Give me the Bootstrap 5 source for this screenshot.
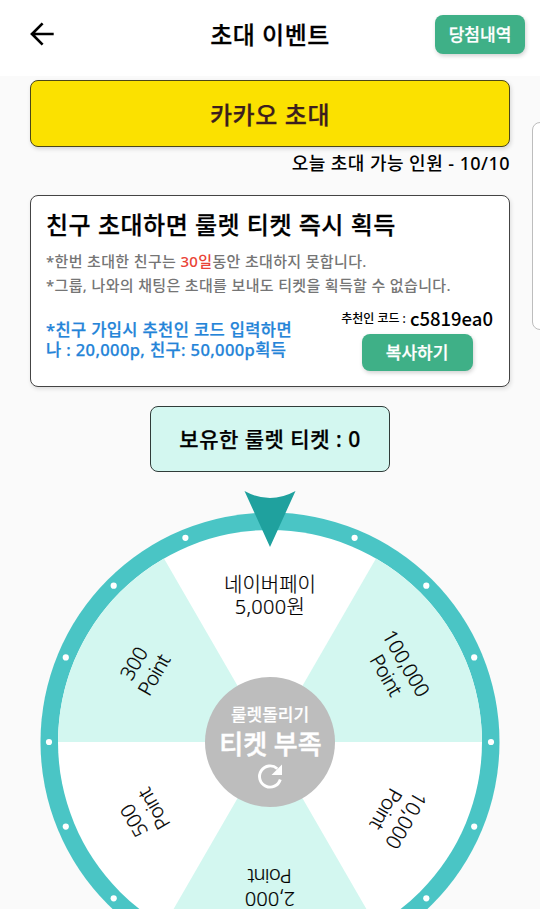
<!DOCTYPE html>
<html lang="ko">
<head>
<meta charset="utf-8">
<meta name="viewport" content="width=device-width, initial-scale=1">
<title>초대 이벤트</title>
<link href="https://cdn.jsdelivr.net/npm/bootstrap@5.3.0/dist/css/bootstrap.min.css" rel="stylesheet">
<style>
body{background:#fafafa;color:#000;height:909px;font-family:"Noto Sans","Noto Sans CJK KR",sans-serif;font-weight:500;line-height:1}
.topbar{height:76px;padding:0 15px 8px}
.topbar>*{flex:1 1 0}
.back svg{margin-left:12px}
.title{font-size:24px;letter-spacing:.5px;padding-top:2px}
.title,.btn,.invite h1,.bonus,.tickets{-webkit-text-stroke:.25px currentColor}
.btn-mint{--bs-btn-bg:#3fb087;--bs-btn-color:#fff;--bs-btn-border-color:#3fb087;--bs-btn-hover-bg:#369a76;--bs-btn-hover-color:#fff;border:0;border-radius:8px;box-shadow:1px 2px 4px rgba(0,0,0,.18);font-weight:500;line-height:1;padding:0}
.btn-history{width:90px;height:39px;font-size:17px}
.btn-copy{width:111px;height:37px;font-size:17px}
.page{padding:4px 30px 0}
.btn-kakao,.btn-kakao:hover{height:67px;background:#fbe100;color:#3c1e1e;border:1px solid #4b4618;border-radius:8px;box-shadow:1px 2px 4px rgba(0,0,0,.15);font-size:24px;font-weight:500;letter-spacing:.6px;padding-top:8px}
.remain{height:48px;padding-top:7px;font-size:18px;letter-spacing:.45px}
.invite{height:192px;border:1px solid #444;border-radius:8px;box-shadow:1px 2px 4px rgba(0,0,0,.12);padding:17px 16px 0 15px;color:#000}
.invite h1{font-size:24px;font-weight:500;line-height:24px;margin-bottom:12px;letter-spacing:.5px}
.note{font-size:15px;line-height:24px;color:#757575;letter-spacing:.34px}
.note b{color:#ea4335;font-weight:500}
.bonus{font-size:16.5px;line-height:20px;color:#2484d8;padding-top:15px;letter-spacing:.38px}
.code-row{height:25px}
.code-label{font-size:12px;padding-bottom:5px}
.code-value{font:500 18.5px/1 "Noto Sans CJK KR",sans-serif;padding-bottom:7px}
.tickets{width:240px;height:66px;margin:19px auto 0;background:#d3f7f0;border:1px solid #303c39;border-radius:8px;font-size:21px;letter-spacing:.5px}
.wheel text{text-anchor:middle;font-weight:300;font-size:20px;stroke:#000;stroke-width:.2px}
.wheel .unit{letter-spacing:-.7px}
.wheel .hub{fill:#fff;font-weight:500;stroke:#fff}
.wheel .hub-action{font-size:17px}
.wheel .hub-status{font-size:26px;stroke-width:.5px}
.side-tab{position:absolute;left:532px;top:122px;width:20px;height:208px;border:1px solid #bdbdbd;border-radius:8px;background:#fff}
</style>
</head>
<body class="position-relative overflow-hidden">
<header class="topbar bg-white d-flex align-items-center">
  <div class="back"><svg class="d-block" width="30" height="30" viewBox="0 0 30 30" fill="none" stroke="#000" stroke-width="2.700"><path d="M26.700 15H5M15.600 4.400L5 15L15.600 25.600"/></svg></div>
  <div class="title text-center text-nowrap">초대 이벤트</div>
  <div class="text-end"><button class="btn btn-mint btn-history">당첨내역</button></div>
</header>
<main class="page">
  <button class="btn btn-kakao w-100">카카오 초대</button>
  <div class="remain text-end text-nowrap">오늘 초대 가능 인원 - 10/10</div>
  <section class="invite bg-white text-nowrap">
    <h1>친구 초대하면 룰렛 티켓 즉시 획득</h1>
    <div class="note">*한번 초대한 친구는 <b>30일</b>동안 초대하지 못합니다.</div>
    <div class="note">*그룹, 나와의 채팅은 초대를 보내도 티켓을 획득할 수 없습니다.</div>
    <div class="d-flex justify-content-between pt-2">
      <div class="bonus">*친구 가입시 추천인 코드 입력하면<br>나 : 20,000p, 친구: 50,000p획득</div>
      <div class="d-flex flex-column align-items-center">
        <div class="code-row d-flex align-items-center gap-1 mt-1"><span class="code-label">추천인 코드 :</span><span class="code-value">c5819ea0</span></div>
        <button class="btn btn-mint btn-copy">복사하기</button>
      </div>
    </div>
  </section>
  <div class="tickets d-flex align-items-center justify-content-center text-nowrap">보유한 룰렛 티켓 : 0</div>
</main>
<svg class="wheel d-block" width="540" height="437" viewBox="0 472 540 437">
  <circle cx="270" cy="742" r="229.500" fill="#4ac5c5"/>
  <circle cx="270" cy="742" r="212" fill="#fff"/>
  <g fill="#d3f7f0">
    <path d="M270 742L376 558.400A212 212 0 0 1 482 742Z"/>
    <path d="M270 742L376 925.600A212 212 0 0 1 164 925.600Z"/>
    <path d="M270 742L58 742A212 212 0 0 1 164 558.400Z"/>
  </g>
  <g fill="#fff">
    <circle cx="185.400" cy="537.800" r="3.100"/><circle cx="354.600" cy="537.800" r="3.100"/>
    <circle cx="113.700" cy="585.700" r="3.100"/><circle cx="426.300" cy="585.700" r="3.100"/>
    <circle cx="65.800" cy="657.400" r="3.100"/><circle cx="474.200" cy="657.400" r="3.100"/>
    <circle cx="49" cy="742" r="3.100"/><circle cx="491" cy="742" r="3.100"/>
    <circle cx="65.800" cy="826.600" r="3.100"/><circle cx="474.200" cy="826.600" r="3.100"/>
    <circle cx="113.700" cy="898.300" r="3.100"/><circle cx="426.300" cy="898.300" r="3.100"/>
  </g>
  <g><text x="270" y="591.500">네이버페이</text><text x="270" y="614" letter-spacing=".3">5,000원</text></g>
  <g transform="rotate(60 270 742)"><text x="270" y="592">100,000</text><text class="unit" x="270" y="615">Point</text></g>
  <g transform="rotate(120 270 742)"><text x="270" y="592">10,000</text><text class="unit" x="270" y="615">Point</text></g>
  <g transform="rotate(180 270 742)"><text x="270" y="592">2,000</text><text class="unit" x="270" y="615">Point</text></g>
  <g transform="rotate(240 270 742)"><text x="270" y="592">500</text><text class="unit" x="270" y="615">Point</text></g>
  <g transform="rotate(300 270 742)"><text x="270" y="592">300</text><text class="unit" x="270" y="615">Point</text></g>
  <path d="M244.500 491Q270 505 295.500 491L270 547Z" fill="#1fa19e"/>
  <circle cx="270" cy="742" r="65" fill="#bdbdbd"/>
  <text class="hub hub-action" x="270" y="720.500">룰렛돌리기</text>
  <text class="hub hub-status" x="270.500" y="754">티켓 부족</text>
  <path d="M280.300 779.500A10.600 10.600 0 1 1 277.300 768.700" fill="none" stroke="#fff" stroke-width="2.900"/>
  <path d="M282 764.500V775H271.500Z" fill="#fff"/>
</svg>
<div class="side-tab"></div>
<script src="https://cdn.jsdelivr.net/npm/bootstrap@5.3.0/dist/js/bootstrap.bundle.min.js"></script>
</body>
</html>
